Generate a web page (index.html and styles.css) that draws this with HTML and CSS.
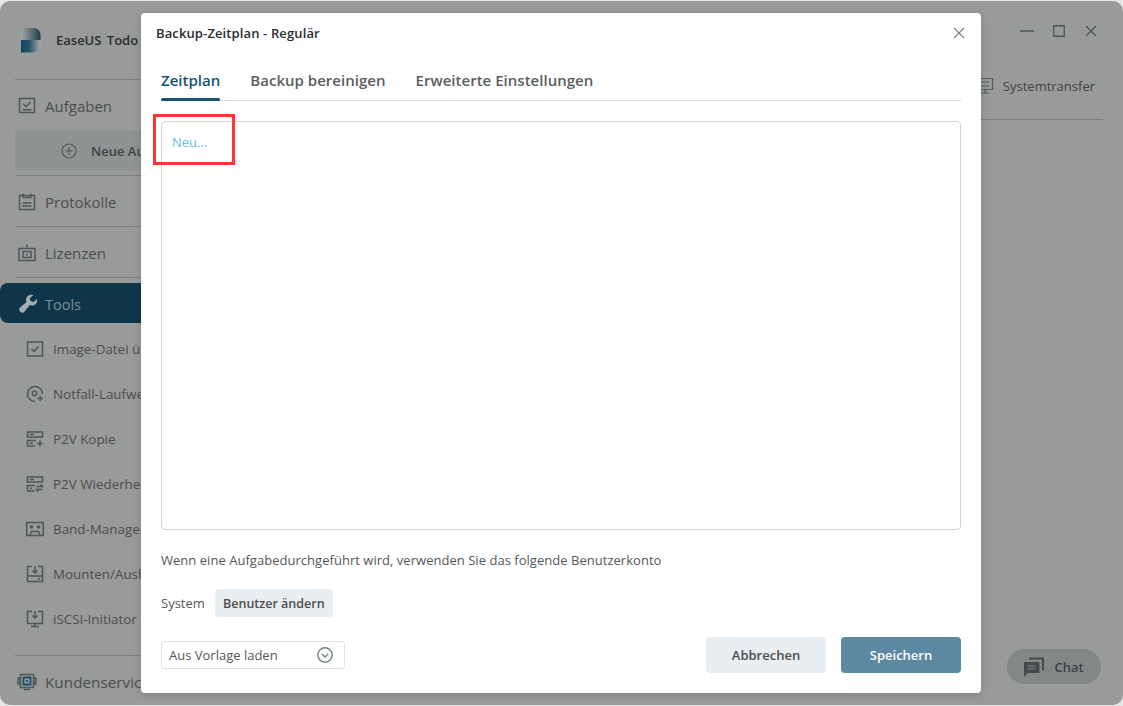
FILE: index.html
```html
<!DOCTYPE html>
<html lang="de">
<head>
<meta charset="utf-8">
<title>EaseUS Todo Backup</title>
<link rel="stylesheet" href="styles.css">
</head>
<body>
<div class="app">
  <aside class="sidebar">
    <div class="brand">
      <svg class="logo" width="20" height="25" viewBox="0 0 20 25"><defs><linearGradient id="lgTop" x1="0" x2="1" y1="0" y2="0"><stop offset="0" stop-color="#a3a6a6"/><stop offset="1" stop-color="#243c48"/></linearGradient><linearGradient id="lgBottom" x1="0" x2="1" y1="0" y2="0"><stop offset="0" stop-color="#0e4660"/><stop offset=".45" stop-color="#2d5568"/><stop offset="1" stop-color="#a6a9a9"/></linearGradient></defs><path d="M0 0H13a6.500 6.500 0 0 1 6.500 6.500V12H0Z" fill="url(#lgTop)"/><path d="M0 12H19.500V17a7.500 7.500 0 0 1-7.500 7.500H0Z" fill="url(#lgBottom)"/></svg>
      <span class="brand-name">EaseUS Todo Backup</span>
    </div>
    <nav class="nav">
      <div class="nav-group first">
        <div class="nav-item"><svg class="ic" viewBox="0 0 18 18"><path d="M1.500 1.500h15v14h-15zM4.500 12.800h9M5.500 7l2.500 2.500L12.500 5"/></svg>Aufgaben</div>
        <div class="new-task"><svg class="plus" viewBox="0 0 16 16"><circle cx="8" cy="8" r="7"/><path d="M8 4.500v7M4.500 8h7"/></svg>Neue Aufgabe</div>
      </div>
      <div class="nav-group"><div class="nav-item"><svg class="ic" viewBox="0 0 18 18"><path d="M1.500 2.500h15v14h-15zM5 .5v4h8v-4M4.500 10h9M4.500 13h9"/></svg>Protokolle</div></div>
      <div class="nav-group"><div class="nav-item"><svg class="ic" viewBox="0 0 18 18"><path d="M1 4.500h16v12H1zM9 .5v3M5 7.500h8v6H5zM8 10.500h2"/></svg>Lizenzen</div></div>
      <div class="nav-group tools-group">
        <div class="nav-item active"><svg class="wrench" viewBox="0 0 20 20"><path d="M19 5l-3.500 3-3-1-.7-3L15.500 1C11.500-.3 7.800 2.300 8 6.300c0 .7.100 1.300.3 1.900L2 13.500c-1.200 1.200-1 3 .2 4.200s3 1.300 4.200.1l5.500-6.700C16 12.700 20 9.500 19 5z"/></svg>Tools</div>
      </div>
      <ul class="tools">
        <li><svg class="ic" viewBox="0 0 18 18"><path d="M1.500 2h15v14h-15zM5.500 9l2.500 2.500 4.500-5"/></svg>Image-Datei überprüfen</li>
        <li><svg class="ic" viewBox="0 0 18 18"><path d="M9 16.500A7.500 7.500 0 1 1 16.500 9M11.500 13.500h5.500M14.200 10.800v5.500"/><circle cx="8.500" cy="8.500" r="2.200"/></svg>Notfall-Laufwerk</li>
        <li><svg class="ic" viewBox="0 0 18 18"><path d="M1.500 2h15v5h-15zM10 10.500H1.500V16H9M4 4.500h4M4 13.200h3M11 13.500h6M14 10.500v6"/></svg>P2V Kopie</li>
        <li><svg class="ic" viewBox="0 0 18 18"><path d="M1.500 2h15v5h-15zM8.500 10.500h-7V16h7M4 4.500h4M4 13.200h2M10.500 11.500h6L14.500 9.500M16.500 14.500h-6l2 2"/></svg>P2V Wiederherstellung</li>
        <li><svg class="ic" viewBox="0 0 18 18"><path d="M.8 2.500h16.400v13H.8zM4 15l1.500-3.500h7L14 15"/><circle cx="5.500" cy="7" r="1"/><circle cx="12.500" cy="7" r="1"/></svg>Band-Manager</li>
        <li><svg class="ic" viewBox="0 0 18 18"><path d="M6 1.500H1.500v15h15v-15H12M1.500 11h15M9 1v7M6.500 5.500L9 8l2.500-2.500M12 13.800h2"/></svg>Mounten/Aushängen</li>
        <li><svg class="ic" viewBox="0 0 18 18"><path d="M6 1.500H1.500v12h15v-12H12M9 1v7M6.500 5.500L9 8l2.500-2.500M9 13.500v3M5 16.500h8"/></svg>iSCSI-Initiator</li>
      </ul>
      <div class="nav-group service"><div class="nav-item"><svg class="ic" viewBox="0 0 20 20"><path class="headset" d="M3.500 2.500h13v13h-13zM3 6v6H1V6zM17 6v6h2V6zM7 17.500h6"/><path class="core" d="M6.500 5.500h7v7h-7zM9 9h2"/></svg>Kundenservice</div></div>
    </nav>
  </aside>
  <main class="content">
    <header class="titlebar">
      <div class="win-controls">
        <svg viewBox="0 0 16 16"><path d="M0 8h16"/></svg>
        <svg viewBox="0 0 16 16"><path d="M2 2h12v12H2z"/></svg>
        <svg viewBox="0 0 16 16"><path d="M2.500 2.500l11 11M13.500 2.500l-11 11"/></svg>
      </div>
    </header>
    <div class="toolbar">
      <span class="transfer"><svg viewBox="0 0 18 18"><path d="M1.500 1.500h15v11h-15zM9 12.500v3M5 16h8M5 5h8M5 9h8"/></svg>Systemtransfer</span>
    </div>
    <button class="chat"><svg viewBox="0 0 20 20" width="20" height="20"><path class="chat-back" d="M5 1.500h14v12"/><path class="chat-front" d="M0 5h15.500v11H3.500L0 20z"/><path class="chat-lines" d="M3.500 9h8M3.500 12h8"/></svg>Chat</button>
  </main>
</div>
<section class="dialog">
  <div class="dialog-head">
    <h1>Backup-Zeitplan - Regulär</h1>
    <svg class="close" viewBox="0 0 12 12"><path d="M1 1l10 10M11 1L1 11"/></svg>
  </div>
  <div class="tabs">
    <span class="tab current">Zeitplan</span>
    <span class="tab">Backup bereinigen</span>
    <span class="tab">Erweiterte Einstellungen</span>
  </div>
  <div class="schedule-box"><a class="new-link">Neu...</a><span class="highlight"></span></div>
  <p class="account-note">Wenn eine Aufgabedurchgeführt wird, verwenden Sie das folgende Benutzerkonto</p>
  <div class="account-row"><span>System</span><button class="btn-user">Benutzer ändern</button></div>
  <div class="dialog-foot">
    <div class="template"><span>Aus Vorlage laden</span><svg viewBox="0 0 16 16"><circle cx="8" cy="8" r="7.200"/><path d="M4.800 6.800L8 10l3.200-3.200"/></svg></div>
    <div class="actions"><button class="btn cancel">Abbrechen</button><button class="btn save">Speichern</button></div>
  </div>
</section>
</body>
</html>
```
FILE: styles.css
```css
* { box-sizing: border-box; }
html, body { margin: 0; height: 100%; }
body {
  width: 1123px; height: 706px; overflow: hidden; position: relative;
  background: #e6e6e6; color: #444;
  font-family: "Open Sans", "Noto Sans", sans-serif; font-size: 13px;
}
svg { display: block; flex: none; fill: none; stroke-width: 1.200; }
button { font-family: inherit; border: 0; }

.app {
  width: 1123px; height: 704px; margin-top: 1px;
  display: flex; overflow: hidden;
  background: #999a9a; border-radius: 10px;
}
.sidebar { width: 141px; flex: none; padding-left: 15px; white-space: nowrap; overflow: hidden; }
.brand { height: 78px; display: flex; align-items: center; padding: 0 0 0 6px; gap: 15px; }
.brand-name { font-size: 13px; font-weight: 600; word-spacing: 2px; color: #2b2e2f; }
.nav-group { border-top: 1px solid #7e8080; }
.nav-item {
  height: 50px; padding-top: 2px; display: flex; align-items: center; gap: 9px;
  font-size: 15px; color: #4c4e4e;
}
.ic { width: 18px; height: 18px; stroke: #4f5759; stroke-width: 1.500; }
.nav-item .ic { margin-left: 3px; }
.new-task {
  height: 40px; margin-bottom: 5px; border-radius: 4px 0 0 4px; background: #8f9394;
  display: flex; align-items: center; padding: 1px 0 0 46px; gap: 14px;
  font-size: 13px; font-weight: 600; color: #3f4243;
}
.plus { width: 16px; height: 16px; stroke: #55595a; }
.tools-group { padding-top: 5px; }
.nav-item.active {
  height: 40px; margin-left: -15px; padding: 2px 0 0 18px; gap: 7px; font-size: 14.500px;
  background: #0e3548; color: #7d9099; border-radius: 8px 0 0 8px;
}
.wrench { width: 20px; height: 20px; fill: #a4aeb2; }
.tools { list-style: none; margin: 0; padding: 3px 0 0 11px; }
.tools li { height: 45px; display: flex; align-items: center; gap: 9px; font-size: 13.400px; color: #4c4e4e; }
.service { margin-top: 14px; }
.service .ic { width: 20px; height: 20px; margin-left: 2px; }
.service .nav-item { gap: 8px; font-size: 15.300px; }
.core { stroke: #14506e; stroke-width: 1.800; }

.content { flex: 1; position: relative; }
.titlebar { height: 60px; display: flex; justify-content: flex-end; align-items: center; padding-right: 25px; }
.win-controls { display: flex; gap: 18px; }
.win-controls svg { width: 14px; height: 14px; stroke: #4f5556; stroke-width: 1.500; }
.toolbar {
  height: 59px; margin-right: 20px; border-bottom: 1px solid #7e8080;
  display: flex; justify-content: flex-end; align-items: center; padding: 0 8px 8px 0;
}
.transfer { display: flex; align-items: center; gap: 9px; font-size: 13px; color: #414445; }
.transfer svg { width: 18px; height: 18px; stroke: #515a5c; }
.chat {
  position: absolute; right: 22px; bottom: 21px; width: 94px; height: 35px;
  border-radius: 18px; background: #838788;
  display: flex; align-items: center; justify-content: center; gap: 10px;
  font-size: 13px; font-weight: 600; color: #3e4142;
}
.chat-back { stroke: #454a4b; stroke-width: 2; }
.chat-front { fill: #454a4b; }
.chat-lines { stroke: #83898a; }

.dialog {
  position: absolute; left: 141px; top: 13px; width: 840px; height: 680px;
  background: #fff; border-radius: 4px; padding: 0 20px;
  box-shadow: 0 2px 8px rgba(0,0,0,.15);
  display: flex; flex-direction: column; color: #4d4f50;
}
.dialog-head { height: 40px; display: flex; align-items: center; justify-content: space-between; margin: 0 -4px 0 -5px; }
.dialog-head h1 { margin: 0; font-size: 13px; font-weight: 600; letter-spacing: .12px; color: #2a2c2d; }
.close { width: 12px; height: 12px; stroke: #78817f; stroke-width: 1.200; }
.tabs { height: 48px; display: flex; gap: 30px; border-bottom: 1px solid #d9d9d9; align-items: flex-start; padding-top: 15px; }
.tab { font-size: 15px; font-weight: 600; letter-spacing: .02px; line-height: 24px; height: 33px; color: #5b5d5e; position: relative; }
.tab.current { color: #15546f; }
.tab.current::after {
  content: ""; position: absolute; left: 0; right: 0; bottom: 0; height: 3px;
  background: #15546f; border-radius: 2px;
}
.schedule-box {
  height: 409px; margin-top: 20px; border: 1px solid #d4d4d4; border-radius: 4px;
  padding: 11px 10px; position: relative;
}
.new-link { font-size: 13px; line-height: 18px; color: #67bce6; display: block; }
.highlight {
  position: absolute; left: -9px; top: -8px; width: 82px; height: 51px;
  border: 3px solid #ff3333;
}
.account-note { margin: 21px 0 0; font-size: 13px; letter-spacing: .03px; line-height: 18px; color: #555758; }
.account-row { display: flex; align-items: center; gap: 10px; margin-top: 20px; height: 28px; color: #555758; }
.btn-user {
  height: 28px; width: 118px; padding: 0; border-radius: 4px; background: #e8eef1;
  font-size: 12.500px; font-weight: 600; color: #4b4d4e;
}
.dialog-foot { display: flex; justify-content: space-between; align-items: center; margin-top: 20px; }
.template {
  width: 184px; height: 28px; border: 1px solid #e2e2e2; border-radius: 3px;
  display: flex; align-items: center; justify-content: space-between; padding: 0 11px 0 7px;
  font-size: 13px; color: #555758;
}
.template svg { width: 16px; height: 16px; stroke: #6f8580; stroke-width: 1.400; }
.actions { display: flex; gap: 15px; }
.btn { width: 120px; height: 36px; border-radius: 4px; font-size: 13px; font-weight: 600; }
.cancel { background: #e8eef1; color: #4b4d4e; }
.save { background: #5d88a1; color: #fff; }
```
